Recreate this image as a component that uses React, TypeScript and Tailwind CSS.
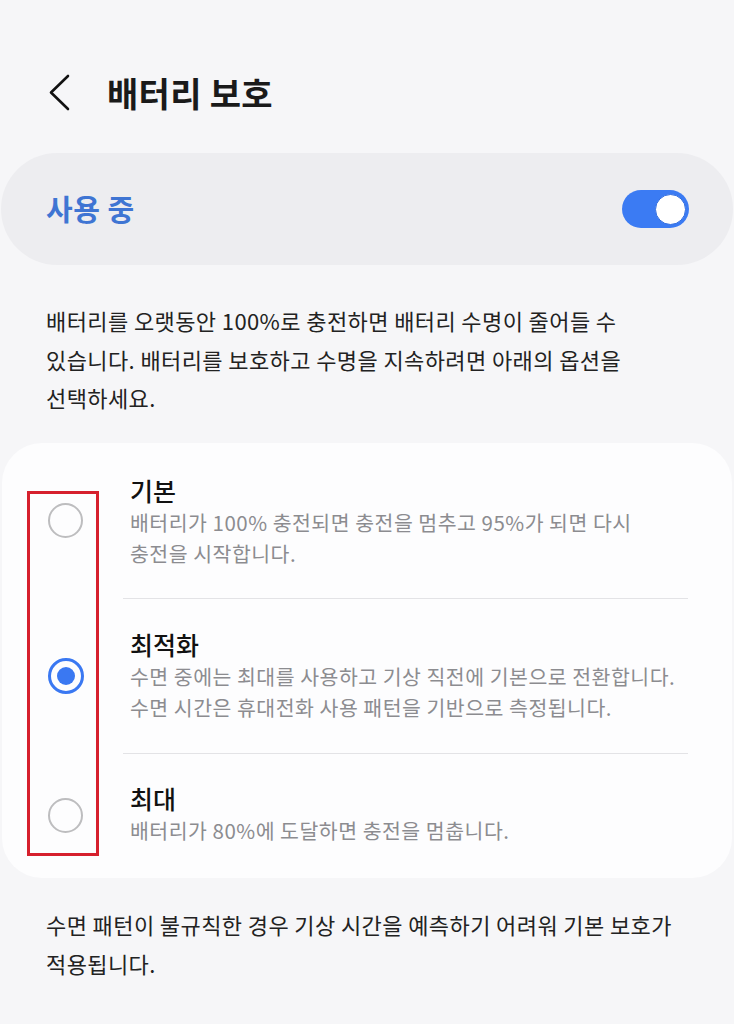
import React from "react"

const options = [
  {
    title: "기본",
    desc: "배터리가 100% 충전되면 충전을 멈추고 95%가 되면 다시 충전을 시작합니다.",
    selected: false,
  },
  {
    title: "최적화",
    desc: "수면 중에는 최대를 사용하고 기상 직전에 기본으로 전환합니다. 수면 시간은 휴대전화 사용 패턴을 기반으로 측정됩니다.",
    selected: true,
  },
  {
    title: "최대",
    desc: "배터리가 80%에 도달하면 충전을 멈춥니다.",
    selected: false,
  },
]

function Radio({ on }: { on: boolean }) {
  if (on) {
    return (
      <div className="w-[36px] h-[36px] rounded-full border-[3px] border-[#3a78f2] flex items-center justify-center">
        <div className="w-[18px] h-[18px] rounded-full bg-[#3a78f2]" />
      </div>
    )
  }
  return <div className="w-[35px] h-[35px] rounded-full border-[2.5px] border-[#bdbdbf]" />
}

export default function App() {
  return (
    <div
      className="relative w-[734px] h-[1024px] overflow-hidden bg-[#f6f6f8] text-[#1a1a1a] break-keep"
      style={{ fontFamily: '"Noto Sans CJK KR", "Noto Sans", sans-serif' }}
    >
      {/* header */}
      <div className="flex items-center h-[50px] mt-[68px] pl-[49px]">
        <svg width="24" height="40" viewBox="0 0 24 40" fill="none">
          <path d="M19 3 L2 19.5 L19 36" stroke="#111" strokeWidth="2.6" strokeLinecap="round" strokeLinejoin="round" />
        </svg>
        <h1 className="ml-[34px] text-[34px] font-bold tracking-[0.3px] leading-none">배터리 보호</h1>
      </div>

      {/* master switch */}
      <div className="mt-[35px] mx-[1px] h-[112px] rounded-full bg-[#ededf0] flex items-center justify-between pl-[45px] pr-[44px]">
        <span className="text-[29px] font-bold text-[#3f75d3] tracking-[0.5px]">사용 중</span>
        <div className="w-[67px] h-[38px] rounded-full bg-[#3b7bf3] flex items-center justify-end pr-[3px]">
          <div className="w-[31px] h-[31px] rounded-full bg-white border border-[#3570e0]" />
        </div>
      </div>

      {/* description */}
      <p className="mt-[36px] px-[46px] text-[22px] tracking-[0.4px] leading-[38.5px] text-[#222]">
        배터리를 오랫동안 100%로 충전하면 배터리 수명이 줄어들 수 있습니다. 배터리를 보호하고 수명을 지속하려면 아래의 옵션을 선택하세요.
      </p>

      {/* options */}
      <div className="mt-[26px] mx-[2px] rounded-[40px] bg-[#fdfdfe]">
        {options.map((o, i) => (
          <div key={o.title} className="flex items-stretch">
            <div className="w-[121px] shrink-0 flex items-center pl-[46px]">
              <Radio on={o.selected} />
            </div>
            <div
              className={
                "flex-1 mr-[44px] pl-[7px] " +
                (i === 0 ? "pt-[30px] pb-[29px] border-b border-[#e3e3e6]" : "") +
                (i === 1 ? "pt-[28px] pb-[30px] border-b border-[#e3e3e6]" : "") +
                (i === 2 ? "pt-[27px] pb-[32px]" : "")
              }
            >
              <div className="text-[25px] font-medium leading-[34px] text-[#111]">{o.title}</div>
              <div className="text-[20.5px] tracking-[0.5px] leading-[31px] text-[#8c8c90]">{o.desc}</div>
            </div>
          </div>
        ))}
      </div>

      {/* footer note */}
      <p className="mt-[27px] px-[46px] text-[22px] tracking-[0.4px] leading-[39px] text-[#222]">
        수면 패턴이 불규칙한 경우 기상 시간을 예측하기 어려워 기본 보호가 적용됩니다.
      </p>

      {/* annotation box */}
      <div className="absolute left-[27px] top-[491px] w-[72px] h-[365px] border-[3px] border-[#d6202d]" />
    </div>
  )
}
